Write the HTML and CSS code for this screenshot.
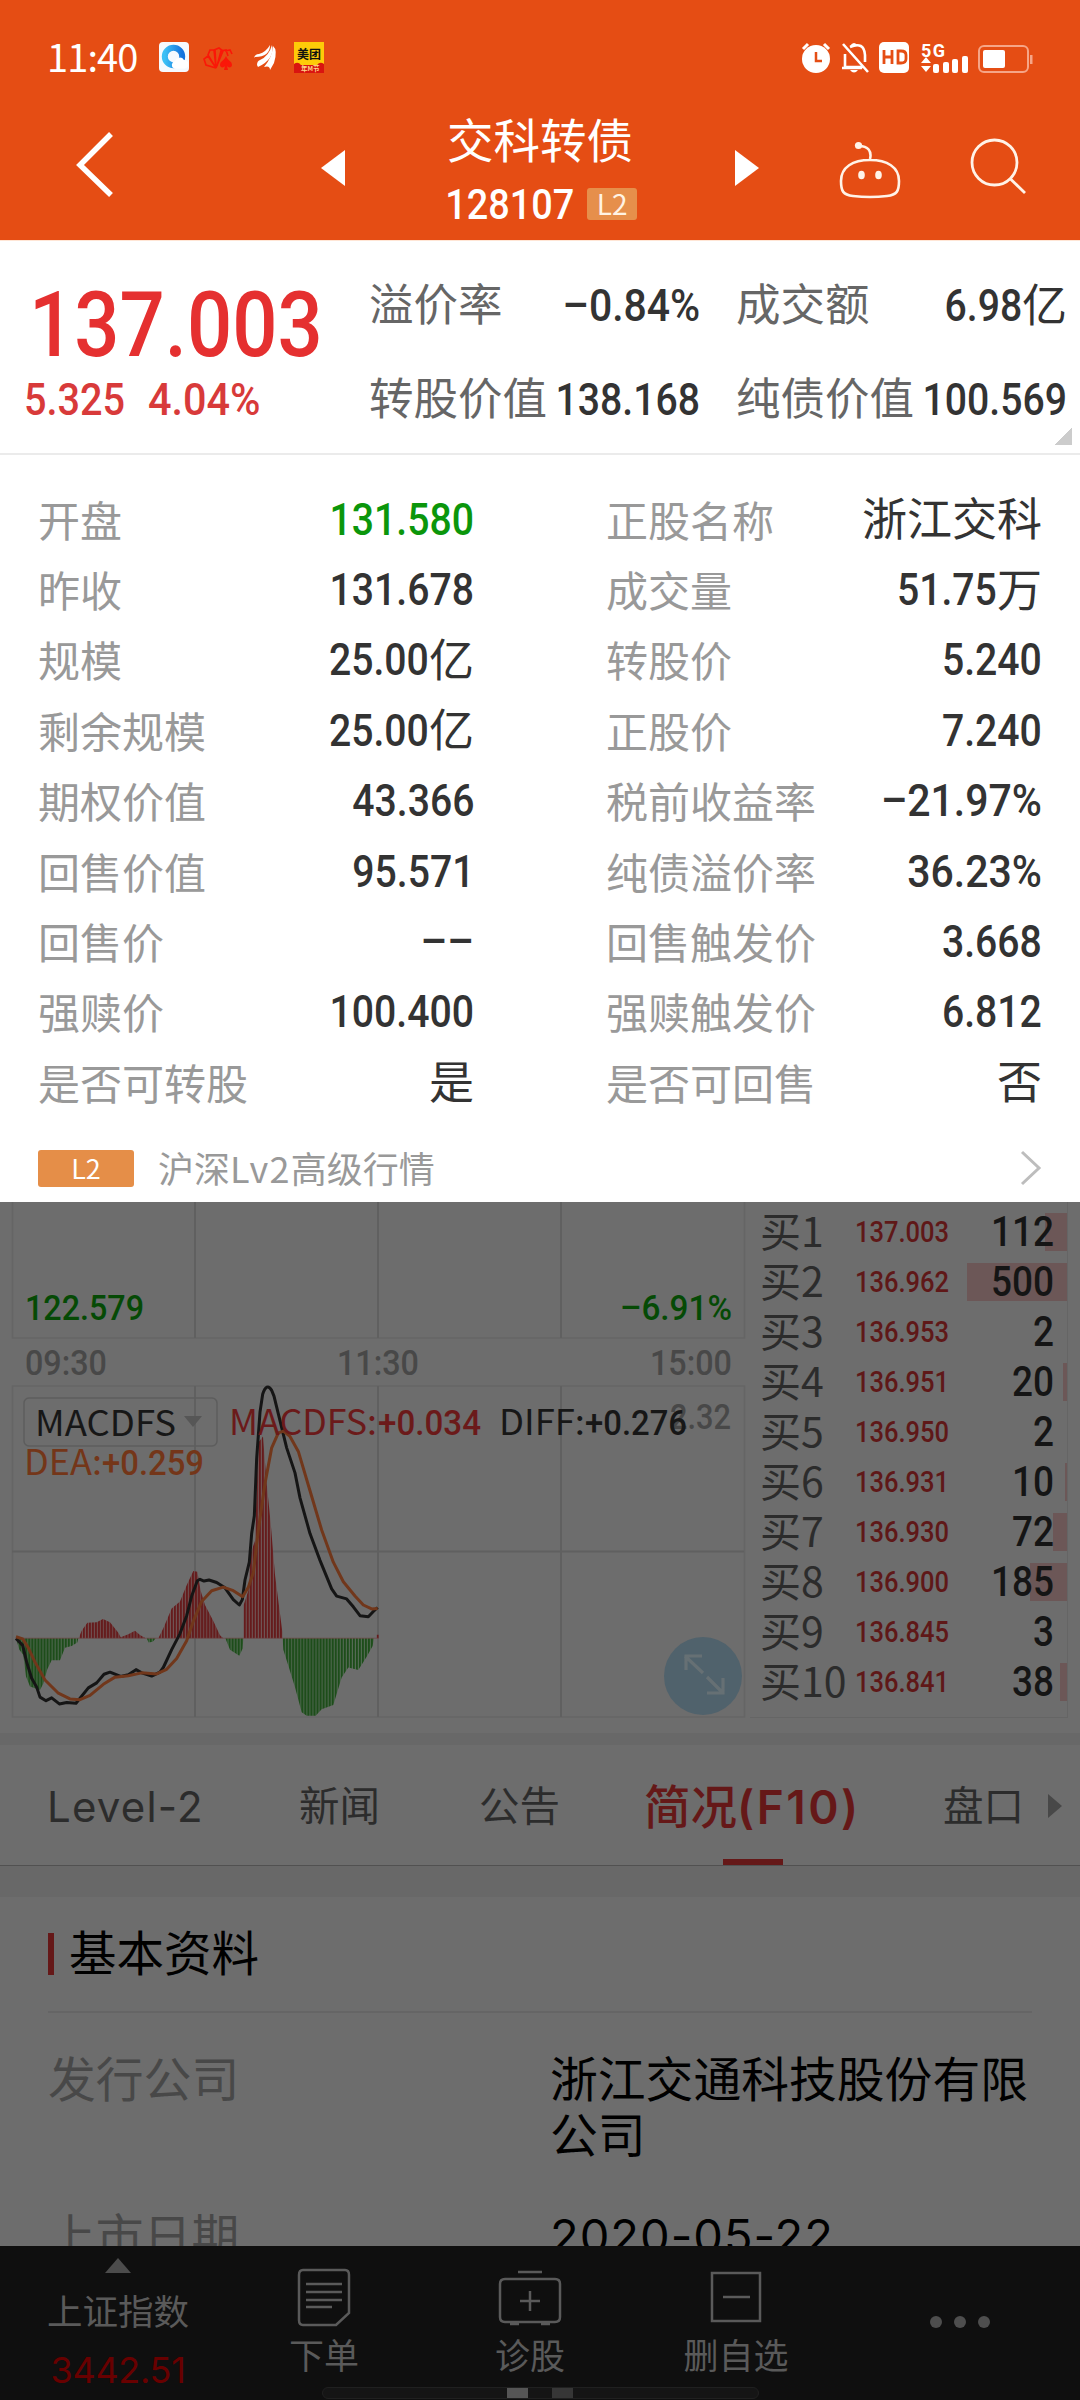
FILE: index.html
```html
<!DOCTYPE html>
<html lang="zh-CN">
<head>
<meta charset="utf-8">
<title>交科转债 128107</title>
<link rel="stylesheet" href="styles.css">
</head>
<body>
<header class="header">
  <div class="status">
    <span class="clock">11:40</span>
    <svg class="apps" width="170" height="32" viewBox="0 0 170 32">
      <defs><linearGradient id="blue" x1="0" y1="0" x2="1" y2="0"><stop offset="0" stop-color="#3cc0f5"/><stop offset="1" stop-color="#1673dd"/></linearGradient></defs>
      <rect x="1" y="1" width="30" height="30" rx="4" fill="#f6fafe"/>
      <circle cx="15.500" cy="15.500" r="8.700" fill="none" stroke="url(#blue)" stroke-width="6"/>
      <path d="M16 27.500a4 4 0 0 1 1-7.500 5 5 0 0 1 9-1 4.300 4.300 0 0 1 1 8.500z" fill="#fff"/>
      <g fill="none" stroke="#fa1708" stroke-width="1.600"><path d="M58 27l-10-3-2-6 4-3 8 12M58 27l-8-13 2-5 5 0 1 18M58 27l-2-18 5-2 4 3-7 17M59 25l4-15 5-1 2 6M67 10l5-1 2 4"/></g>
      <path d="M68 15c2 5 6 5 6 9 0 3-4 3-5 1l1 4h-4l1-4c-1 2-5 2-5-1 0-4 4-4 6-9z" fill="#fa1708"/>
      <g fill="#fff"><path d="M96 17q1-4 5-4 7-2 11-9 0 12-15 12z"/><path d="M99 24q0-4 3-5 9-4 12-15 3 14-14 22z"/><path d="M106 26q8-9 9-21 5 4 1 17l-4 7q0-5-6-3z"/></g>
      <rect x="136" y="1" width="30" height="31" fill="#fecb08"/>
      <text x="139" y="18" font-size="12" font-weight="700" fill="#111">美团</text>
      <path d="M136 23q4-3 7 1h16q3-4 7-1v9h-30z" fill="#d91410"/>
      <text x="143" y="30" font-size="6.500" font-weight="700" fill="#ffd68a">年M节</text>
    </svg>
    <svg class="sysicons" width="236" height="32" viewBox="0 0 236 32">
      <g fill="none" stroke="#fff" stroke-width="3"><path d="M3 8l5-5M24 3l5 5"/></g>
      <circle cx="16" cy="18" r="14" fill="#fff"/><path d="M16 11v9h6" fill="none" stroke="#e54d14" stroke-width="2.500"/>
      <g fill="none" stroke="#fff" stroke-width="2.600"><path d="M43 3l25 28M45 13v13h19M42 27h20M50 6q14-6 15 8v7"/></g>
      <path d="M50 5q4-6 8 0zM50 29h8q-4 5-8 0z" fill="#fff"/>
      <rect x="79" y="1" width="30" height="31" rx="5" fill="#fff"/>
      <path d="M84 9v14M92 9v14M84 16h8M98 10h3q5 0 5 4v4q0 4-5 4h-3z" fill="none" stroke="#e54d14" stroke-width="2.800"/>
      <text class="net" x="121" y="16" textLength="24">5G</text>
      <path d="M126 16l5 6h-10zM126 31l5-6h-10z" fill="#fff"/>
      <g fill="#fff"><rect x="133" y="23" width="6" height="9" rx="2"/><rect x="143" y="21" width="6" height="11" rx="2"/><rect x="152" y="18" width="6" height="14" rx="2"/><rect x="162" y="15" width="6" height="17" rx="2"/></g>
      <rect x="179" y="5" width="49" height="26" rx="5" fill="none" stroke="#f6a587" stroke-width="2"/><rect x="183" y="9" width="22" height="18" rx="2" fill="#fff"/><rect x="230" y="14" width="2.500" height="9" fill="#f6a587"/>
    </svg>
  </div>
  <nav class="titlebar">
    <svg class="back" width="40" height="70" viewBox="0 0 40 70"><path d="M36 5L5 36l31 30" fill="none" stroke="#fff" stroke-width="5.500"/></svg>
    <svg class="prev" width="24" height="36" viewBox="0 0 24 36"><path d="M24 0v36L0 18z" fill="#fff"/></svg>
    <div class="names">
      <h1>交科转债</h1>
      <div class="code"><span class="num">128107</span><span class="tag">L2</span></div>
    </div>
    <svg class="next" width="24" height="36" viewBox="0 0 24 36"><path d="M0 0v36l24-18z" fill="#fff"/></svg>
    <svg class="robot" width="62" height="60" viewBox="0 0 62 60">
      <g fill="none" stroke="#fff3e8" stroke-width="2.600"><path d="M31 21C14 21 2 28 2 42c0 10 2 14 12 15q17 2 34 0c10-1 12-5 12-15C60 28 48 21 31 21zM31 20c2-8-2-13-11-13"/></g>
      <circle cx="19.500" cy="6.500" r="3.600" fill="#fff3e8"/><ellipse cx="22.500" cy="36" rx="3.300" ry="4.300" fill="#fff3e8"/><ellipse cx="39.500" cy="36" rx="3.300" ry="4.300" fill="#fff3e8"/>
    </svg>
    <svg class="search" width="58" height="58" viewBox="0 0 58 58"><g fill="none" stroke="#fff3e8" stroke-width="2.800"><circle cx="24.500" cy="25.500" r="22.500"/><path d="M40 41.500L55 56"/></g></svg>
  </nav>
</header>

<main class="quote">
  <section class="summary">
    <div class="price">
      <div class="last num">137.003</div>
      <div class="change"><span class="num">5.325</span><span class="num">4.04%</span></div>
    </div>
    <dl class="keys">
      <div><dt>溢价率</dt><dd><b class="num pct">–0.84%</b></dd></div>
      <div><dt>成交额</dt><dd><b class="num">6.98</b>亿</dd></div>
      <div><dt>转股价值</dt><dd><b class="num">138.168</b></dd></div>
      <div><dt>纯债价值</dt><dd><b class="num">100.569</b></dd></div>
    </dl>
    <i class="corner"></i>
  </section>
  <dl class="details">
    <div><dt>开盘</dt><dd class="down"><b class="num">131.580</b></dd></div>
    <div><dt>正股名称</dt><dd>浙江交科</dd></div>
    <div><dt>昨收</dt><dd><b class="num">131.678</b></dd></div>
    <div><dt>成交量</dt><dd><b class="num">51.75</b>万</dd></div>
    <div><dt>规模</dt><dd><b class="num">25.00</b>亿</dd></div>
    <div><dt>转股价</dt><dd><b class="num">5.240</b></dd></div>
    <div><dt>剩余规模</dt><dd><b class="num">25.00</b>亿</dd></div>
    <div><dt>正股价</dt><dd><b class="num">7.240</b></dd></div>
    <div><dt>期权价值</dt><dd><b class="num">43.366</b></dd></div>
    <div><dt>税前收益率</dt><dd><b class="num pct">–21.97%</b></dd></div>
    <div><dt>回售价值</dt><dd><b class="num">95.571</b></dd></div>
    <div><dt>纯债溢价率</dt><dd><b class="num pct">36.23%</b></dd></div>
    <div><dt>回售价</dt><dd><b class="num dashes">––</b></dd></div>
    <div><dt>回售触发价</dt><dd><b class="num">3.668</b></dd></div>
    <div><dt>强赎价</dt><dd><b class="num">100.400</b></dd></div>
    <div><dt>强赎触发价</dt><dd><b class="num">6.812</b></dd></div>
    <div><dt>是否可转股</dt><dd>是</dd></div>
    <div><dt>是否可回售</dt><dd>否</dd></div>
  </dl>
  <div class="level2">
    <span class="badge">L2</span><span class="promo">沪深<span class="wide">Lv2</span>高级行情</span>
    <svg width="22" height="36" viewBox="0 0 22 36"><path d="M2 2l17 16L2 34" fill="none" stroke="#bdbdbd" stroke-width="3"/></svg>
  </div>
</main>

<section class="market">
  <svg class="chart" width="750" height="531" viewBox="0 0 750 531">
    <defs>
      <pattern id="up" width="9.100" height="2000" x="3" patternUnits="userSpaceOnUse"><rect width="9.100" height="2000" fill="#6f5555"/><rect width="6.200" height="2000" fill="#651b1c"/></pattern>
      <pattern id="dn" width="9.100" height="2000" x="3" patternUnits="userSpaceOnUse"><rect width="9.100" height="2000" fill="#566b56"/><rect width="6.200" height="2000" fill="#1d4d1a"/></pattern>
    </defs>
    <g fill="none" stroke="#656565" stroke-width="1.500">
      <path d="M12.500 0v136h732V0M12.500 184h732v331h-732z"/>
    </g>
    <g fill="none" stroke="#606060" stroke-width="2"><path d="M195 0v136M378 0v136M561 0v136M195 184v331M378 184v331M561 184v331M12 349.500h732"/></g>
    <text class="n g" x="25" y="118" textLength="119" lengthAdjust="spacingAndGlyphs">122.579</text>
    <text class="n g" x="620" y="118" textLength="112" lengthAdjust="spacingAndGlyphs">–6.91%</text>
    <g class="n t"><text x="25" y="173" textLength="82" lengthAdjust="spacingAndGlyphs">09:30</text><text x="337" y="173" textLength="82" lengthAdjust="spacingAndGlyphs">11:30</text><text x="650" y="173" textLength="82" lengthAdjust="spacingAndGlyphs">15:00</text>
    <text x="670" y="227" textLength="61" lengthAdjust="spacingAndGlyphs">2.32</text></g>
    <rect x="24" y="196" width="193" height="48" rx="5" fill="none" stroke="#5d5d5d" stroke-width="1.500"/>
    <path d="M184 214h18l-9 11z" fill="#565656"/>
    <text class="c k" x="35" y="234" textLength="141" lengthAdjust="spacingAndGlyphs">MACDFS</text>
    <g transform="translate(0 -22) scale(.33333 .35714)">
      <g fill="url(#dn)">
        <path d="M48 1283L58 1315 70 1330 78 1390 90 1418 120 1428 130 1410 142 1370 155 1345 180 1345 195 1310 215 1305 232 1295 235 1283z"/>
        <path d="M440 1283l6 12 12-2 10-10zM676 1283l14 32 28 17 10-20 2-29z"/>
        <path d="M848 1283L850 1315 870 1375 885 1420 905 1490 920 1500 947 1500 965 1482 1000 1470 1025 1393 1045 1365 1075 1372 1100 1335 1118 1305 1122 1283z"/>
      </g>
      <g fill="url(#up)">
        <path d="M236 1283L245 1262 262 1240 290 1238 309 1229 330 1238 355 1268 362 1280 385 1272 405 1262 420 1274 437 1283z"/>
        <path d="M475 1283L490 1255 515 1200 540 1180 560 1135 580 1095 592 1097 602 1150 615 1190 640 1235 660 1275 670 1283z"/>
        <path d="M731 1283L731 1190 745 1150 752 1045 765 1010 775 735 789 718 800 850 812 960 825 1105 838 1200 847 1265 847 1283zM1130 1273h6v10h-6z"/>
      </g>
      <path d="M48 1283H1136" stroke="#6d4444" stroke-width="2"/>
      <path class="line diff" d="M48 1284L68 1303 80 1350 95 1395 110 1420 120 1448 138 1458 155 1450 178 1467 200 1463 228 1465 265 1422 290 1408 312 1384 330 1378 362 1390 385 1385 408 1371 425 1380 455 1389 480 1378 490 1365 515 1315 540 1270 560 1220 575 1165 592 1122 600 1118 612 1123 627 1120 650 1127 675 1142 700 1175 718 1190 727 1175 735 1120 748 1070 755 990 763 940 770 780 780 650 788 600Q800 566 815 589L822 605 835 655 860 750 885 820 900 890 930 990 960 1065 995 1145 1010 1165 1040 1173 1060 1195 1080 1220 1105 1223 1120 1208 1133 1197"/>
      <path class="line dea" d="M48 1279L68 1285 85 1310 105 1350 135 1400 175 1437 210 1453 240 1455 270 1443 310 1412 345 1392 385 1388 425 1380 470 1383 500 1370 530 1340 560 1290 580 1235 605 1180 635 1150 670 1140 700 1150 728 1167 745 1140 760 1100 775 980 795 850 815 750 835 708 850 703 870 718 895 760 930 870 965 980 1000 1070 1030 1125 1065 1165 1090 1190 1115 1201 1133 1200"/>
    </g>
    <g class="r"><text class="c" x="229" y="233" textLength="148" lengthAdjust="spacingAndGlyphs">MACDFS:</text><text class="n" x="378" y="233" textLength="103" lengthAdjust="spacingAndGlyphs">+0.034</text></g>
    <g class="k"><text class="c" x="499" y="233" textLength="86" lengthAdjust="spacingAndGlyphs">DIFF:</text><text class="n" x="585" y="233" textLength="102" lengthAdjust="spacingAndGlyphs">+0.276</text></g>
    <g class="o"><text class="c" x="24" y="273" textLength="78" lengthAdjust="spacingAndGlyphs">DEA:</text><text class="n" x="102" y="273" textLength="102" lengthAdjust="spacingAndGlyphs">+0.259</text></g>
    <circle cx="703" cy="474" r="39" fill="#50626c"/>
    <path d="M686 468v-14h16M685 454l18 17M723 476v15h-16M723 491l-16-16" fill="none" stroke="#667074" stroke-width="3.200"/>
  </svg>
  <ol class="book">
    <li><span>买1</span><em>137.003</em><b>112</b><i style="width:22px"></i></li>
    <li><span>买2</span><em>136.962</em><b>500</b><i style="width:100px"></i></li>
    <li><span>买3</span><em>136.953</em><b>2</b></li>
    <li><span>买4</span><em>136.951</em><b>20</b><i style="width:4px"></i></li>
    <li><span>买5</span><em>136.950</em><b>2</b></li>
    <li><span>买6</span><em>136.931</em><b>10</b><i style="width:2px"></i></li>
    <li><span>买7</span><em>136.930</em><b>72</b><i style="width:14px"></i></li>
    <li><span>买8</span><em>136.900</em><b>185</b><i style="width:37px"></i></li>
    <li><span>买9</span><em>136.845</em><b>3</b></li>
    <li><span>买10</span><em>136.841</em><b>38</b><i style="width:7px"></i></li>
  </ol>
</section>

<nav class="tabs">
  <span class="lv">Level-2</span><span>新闻</span><span>公告</span><span class="active">简况<span class="f10">(F10)</span></span><span>盘口</span><i class="more"></i>
</nav>

<section class="profile">
  <h2>基本资料</h2>
  <dl>
    <dt>发行公司</dt><dd>浙江交通科技股份有限公司</dd>
    <dt>上市日期</dt><dd class="date">2020-05-22</dd>
  </dl>
</section>

<footer class="bottom">
  <div class="index"><i></i><span>上证指数</span><strong>3442.51</strong></div>
  <div class="act"><svg width="60" height="60" viewBox="0 0 60 60"><path d="M9 3h42q4 0 4 5v38L42 58H9q-4 0-4-5V8q0-5 4-5zM12 17h36M12 25h36M12 33h36M12 40h26" /></svg><span>下单</span></div>
  <div class="act"><svg width="64" height="60" viewBox="0 0 64 60"><path d="M7 12h50q5 0 5 5v33q0 5-5 5H7q-5 0-5-5V17q0-5 5-5zM20 5h24M22 34h20M32 24v20M12 57h9M43 57h9"/></svg><span>诊股</span></div>
  <div class="act"><svg width="60" height="60" viewBox="0 0 60 60"><path d="M6 6h48v48H6zM17 30h27"/></svg><span>删自选</span></div>
  <div class="dots"><i></i><i></i><i></i></div>
  <div class="home"><i></i><i></i></div>
</footer>
</body>
</html>
```
FILE: styles.css
```css
* { box-sizing: border-box; margin: 0; padding: 0; }
body { width: 1080px; height: 2400px; overflow: hidden; position: relative; background: #6d6d6d; font-family: "Noto Sans CJK SC", sans-serif; font-weight: 400; color: #333; display: flex; flex-direction: column; }
svg { display: block; flex: none; }
i, em { font-style: normal; }
ol { list-style: none; }
.num { display: inline-block; font-family: Roboto, sans-serif; font-weight: 500; transform: scaleX(.87); transform-origin: right center; }
.num.pct { transform: scaleX(.91); }

.header { height: 241px; flex: none; background: #e54d14; color: #fff; border-bottom: 1px solid #ffe6d6; padding-top: 41px; }
.status { display: flex; height: 32px; align-items: center; padding-left: 47px; }
.clock { width: 111px; font-size: 38px; letter-spacing: -.9px; line-height: 32px; margin-top: -3px; }
.apps { margin-right: 472px; }
.net { font: 700 18px Roboto, sans-serif; fill: #fff; }
.titlebar { display: flex; height: 167px; padding-left: 75px; align-items: flex-start; }
.back { margin-top: 56px; }
.prev { margin: 77px 0 0 206px; }
.names { width: 280px; margin-left: 55px; display: flex; flex-direction: column; align-items: center; }
h1 { font-size: 46.500px; font-weight: 400; line-height: 60px; margin-top: 35px; height: 62px; }
.code { display: flex; align-items: center; gap: 13px; height: 66px; padding-top: 2px; margin-right: -4px; }
.code .num { font-size: 42px; margin-left: -16px; line-height: 66px; padding-top: 2px; transform: scaleX(.9); }
.tag { width: 50px; height: 32px; border-radius: 3px; background: #e68f4b; font-size: 28px; line-height: 31px; text-align: center; color: #fff3e4; }
.names + .next { margin: 77px 0 0 55px; }
.robot { margin: 66px 0 0 80px; }
.search { margin: 64px 0 0 69px; }

.quote { height: 961px; flex: none; background: #fff; }
.summary { position: relative; height: 214px; border-bottom: 2px solid #ebebeb; display: flex; }
.price { width: 369px; color: #e53030; }
.last { display: block; width: max-content; font-size: 91px; line-height: 90px; margin: 39px 0 0 29px; transform: scaleX(.875); transform-origin: left; }
.change { display: flex; margin: 0 0 0 24px; font-size: 45px; line-height: 60px; color: #d83a3a; }
.change .num { transform-origin: left; transform: scaleX(.88); width: 124px; }
.change .num + .num { transform: scaleX(.92); }
.keys { width: 699px; height: 212px; display: grid; grid-template-columns: 331px 331px; column-gap: 36px; grid-template-rows: 94px 94px; padding-top: 16px; }
.keys div, .details div { display: flex; justify-content: space-between; align-items: center; white-space: nowrap; }
.keys dt { font-size: 44.500px; color: #666; padding-bottom: 5px; }
dd { font-size: 45px; color: #333; }
.keys dd, .details dd { display: flex; justify-content: flex-end; align-items: center; padding-bottom: 3px; }
.keys dd { width: 0; }
dd .num { padding-top: 5px; }
.corner { position: absolute; right: 8px; bottom: 8px; width: 18px; height: 18px; background: linear-gradient(135deg, transparent 50%, #ccc 50%); }
.details { display: grid; grid-template-columns: 436px 436px; column-gap: 132px; grid-auto-rows: 70.400px; padding: 28px 38px 0; height: 667px; }
.details dt { font-size: 42px; color: #999; }
.details dd.down { color: #0b960b; }
.details .dashes { transform: scaleX(.92); }
.level2 { display: flex; align-items: center; height: 68px; padding: 0 38px; margin-top: 12px; }
.badge { width: 96px; height: 37px; border-radius: 3px; background: #e58e48; color: #fff; font-size: 27px; line-height: 36px; text-align: center; }
.promo { flex: 1; margin-left: 24px; font-size: 36px; line-height: 40px; color: #999; padding-bottom: 2px; }
.wide { letter-spacing: 1.300px; }

.market { height: 531px; flex: none; display: flex; }
.chart .n { font: 500 35px Roboto, sans-serif; }
.chart .c { font: 400 35px "Noto Sans CJK SC", sans-serif; }
.chart .g { fill: #054a05; }
.chart .t { fill: #484848; }
.chart .k { fill: #171717; }
.chart .r { fill: #6b1a1a; }
.chart .o { fill: #743619; }
.line { fill: none; stroke-width: 3; stroke-linejoin: round; vector-effect: non-scaling-stroke; }
.diff { stroke: #151515; }
.dea { stroke: #71371b; }
.book { width: 318px; height: 516px; border: solid #656565; border-width: 0 1px 1px 0; padding: 5px 0 0 10px; }
.book li { position: relative; display: flex; align-items: center; height: 50px; line-height: 50px; }
.book span { width: 95px; font-size: 41px; line-height: 45px; padding-bottom: 5px; color: #2c2c2c; white-space: nowrap; }
.book em { width: 101px; font: 500 29.500px/54px Roboto, sans-serif; color: #5f1818; transform: scaleX(.865); transform-origin: left; }
.book b { position: relative; z-index: 1; flex: 1; text-align: right; padding-right: 13px; font: 500 42px/50px Roboto, sans-serif; color: #151515; transform: scaleX(.88); transform-origin: 98px; }
.book i { position: absolute; right: 0; top: 6px; height: 38px; background: #6c5757; }

.tabs { height: 133px; flex: none; position: relative; display: flex; border-top: 12px solid #686868; border-bottom: 1px solid #515151; font-size: 40.500px; color: #2c2c2c; line-height: 118px; padding-left: 47px; white-space: nowrap; }
.tabs > span:nth-child(1) { width: 252px; font-family: Inter, sans-serif; font-size: 42px; letter-spacing: 1.200px; line-height: 124px; }
.tabs > span:nth-child(2) { width: 180px; }
.tabs > span:nth-child(3) { width: 165px; }
.tabs .active { position: relative; width: 299px; font-size: 46.500px; font-weight: 500; color: #651818; }
.f10 { font-family: Inter, sans-serif; font-size: 46px; font-weight: 600; line-height: 1; letter-spacing: 2.500px; }
.active::after { content: ""; position: absolute; left: 79px; bottom: 0; width: 60px; height: 6px; background: #651818; }
.more { margin: 49px 0 0 24px; border: solid transparent; border-width: 12px 0 12px 14px; border-left-color: #484848; height: 24px; }

.profile { height: 380px; flex: none; border-top: 31px solid #686868; padding: 0 48px; overflow: hidden; }
h2 { height: 116px; border-bottom: 2px solid #656565; font-size: 47.500px; font-weight: 400; color: #000; line-height: 108px; padding-bottom: 6px; display: flex; align-items: center; gap: 15px; }
h2::before { content: ""; width: 6px; height: 42px; margin-top: 6px; background: #651818; }
.profile dl { display: grid; grid-template-columns: 502px 482px; font-size: 47.800px; line-height: 55.500px; padding-top: 36px; grid-template-rows: 157px 60px; }
.profile dt { color: #484848; }
.profile dd { font-size: 47.800px; color: #000; }
.profile .date { font-family: Inter, sans-serif; font-size: 47px; letter-spacing: 1px; padding-top: 2px; }

.bottom { position: relative; height: 154px; flex: none; background: #0f0f0f; display: flex; color: #5a5a5a; }
.index { width: 236px; display: flex; flex-direction: column; align-items: center; padding-top: 12px; }
.index i { border: solid transparent; border-width: 0 13px 15px; border-bottom-color: #4c4c4c; }
.index span { font-size: 35.500px; line-height: 52px; margin-top: 11px; }
.index strong { font-family: Inter, sans-serif; font-weight: 400; font-size: 36px; letter-spacing: -.3px; line-height: 50px; margin-top: 9px; color: #680000; }
.act { width: 176px; display: flex; flex-direction: column; align-items: center; padding-top: 21px; }
.act:nth-child(3) { width: 236px; }
.act svg path { fill: none; stroke: #5a5a5a; stroke-width: 2.500; }
.act span { font-size: 35px; line-height: 52px; margin-top: 1px; }
.dots { display: flex; gap: 12px; margin: 70px 0 0 106px; }
.dots i { width: 12px; height: 12px; border-radius: 50%; background: #4e4e4e; }
.home { position: absolute; left: 322px; bottom: 1px; width: 437px; height: 12px; border: 1px solid #202020; border-radius: 6px; background: #151515; display: flex; gap: 24px; padding-left: 184px; }
.home i { width: 21px; height: 10px; background: #555; }
.home i + i { background: #363636; }
```
